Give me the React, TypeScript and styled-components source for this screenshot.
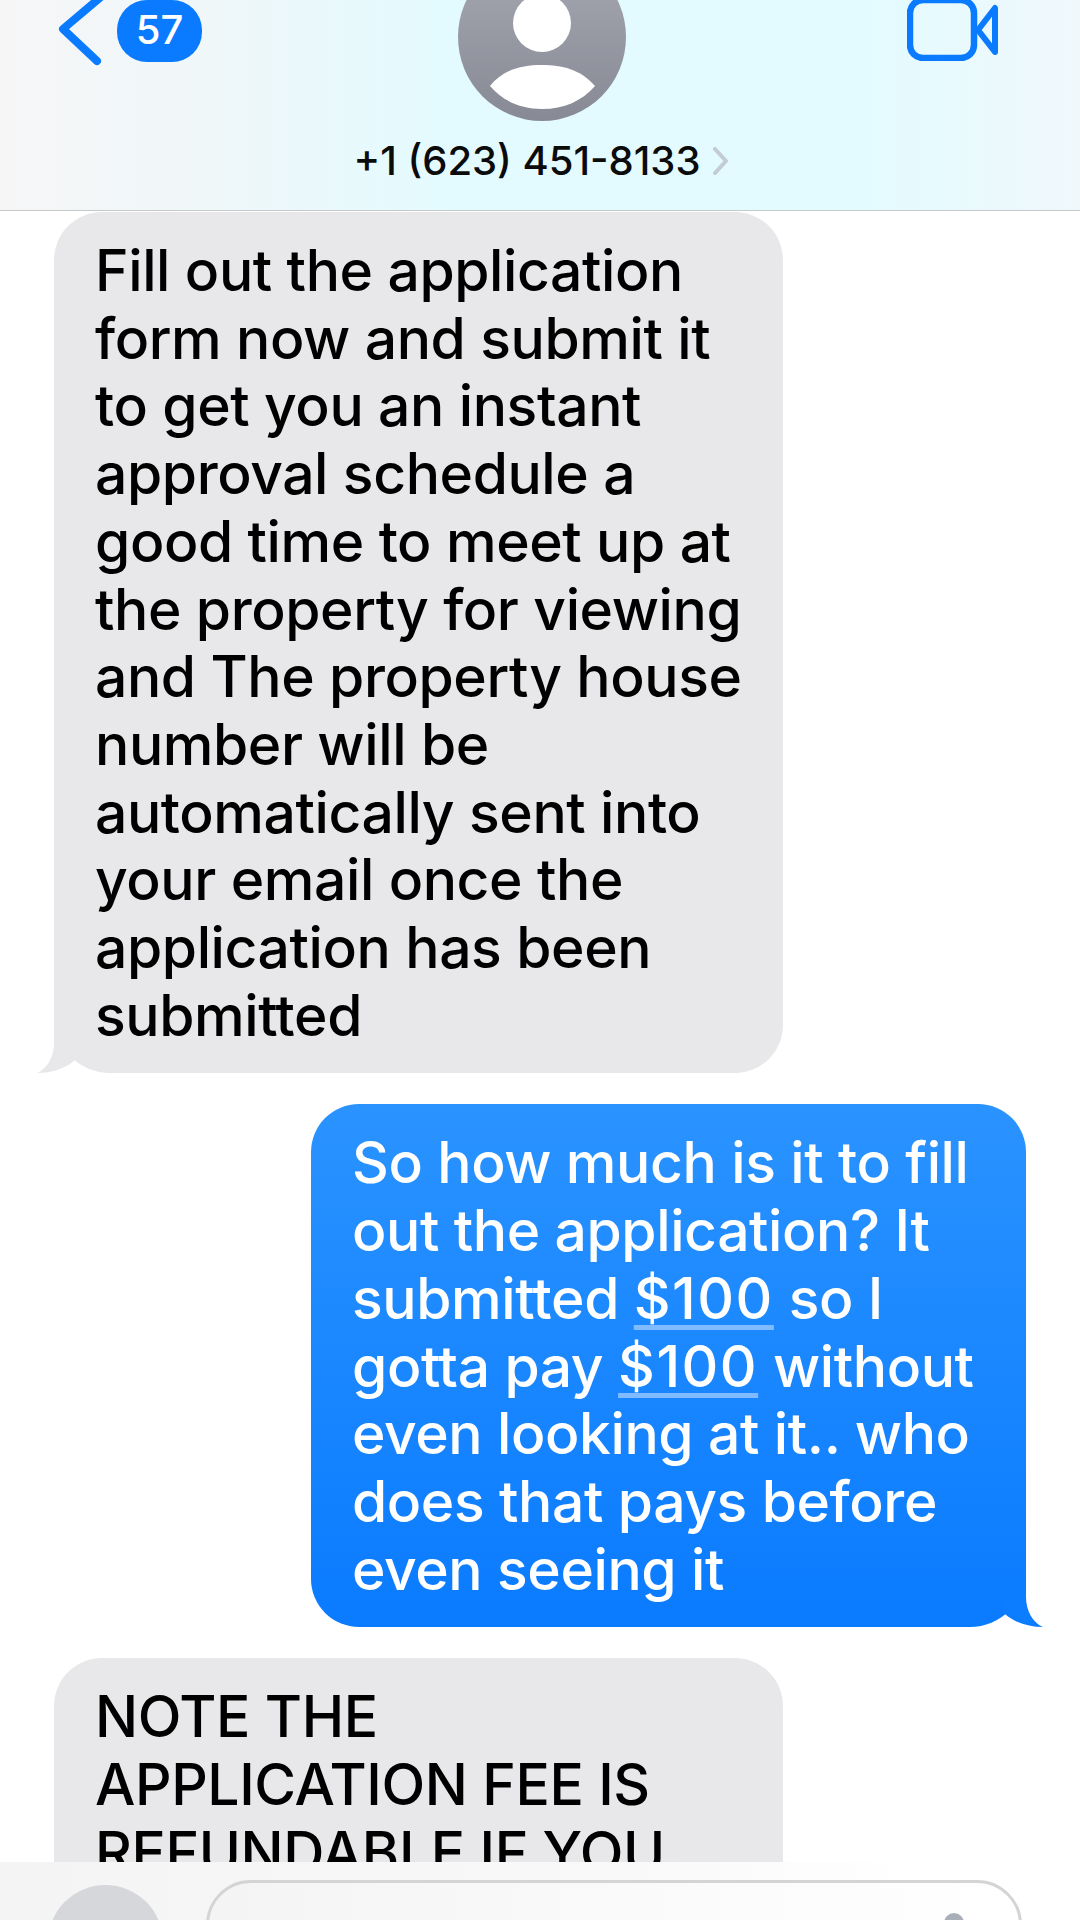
import React from 'react';
import styled, { createGlobalStyle } from 'styled-components';

const GlobalStyle = createGlobalStyle`
  html, body {
    margin: 0;
    padding: 0;
    background: #fff;
  }
`;

const Screen = styled.div`
  width: 1080px;
  height: 1920px;
  display: flex;
  flex-direction: column;
  overflow: hidden;
  background: #fff;
  font-family: Inter, 'Liberation Sans', sans-serif;
`;

const Header = styled.header`
  flex: none;
  height: 211px;
  box-sizing: border-box;
  display: grid;
  grid-template-columns: 1fr 168px 1fr;
  padding: 0 55px 0 58px;
  overflow: hidden;
  border-bottom: 1px solid #c6c8ca;
  background: linear-gradient(90deg, #f6f6f7 0%, #eef7f9 22%, #e3fbff 42%, #e3fbff 80%, #f0f8fb 100%);
`;

const BackGroup = styled.div`
  display: flex;
  align-items: flex-start;
  gap: 11px;
`;

const BackChevron = styled.svg`
  width: 48px;
  height: 80px;
  margin-top: -10px;
  flex: none;
`;

const Badge = styled.div`
  width: 85px;
  height: 62px;
  border-radius: 30px;
  background: #0a7bff;
  color: #fff;
  font-size: 40px;
  font-weight: 500;
  line-height: 60px;
  text-align: center;
`;

const Contact = styled.div`
  display: flex;
  flex-direction: column;
  align-items: center;
`;

const Avatar = styled.svg`
  width: 168px;
  height: 168px;
  margin-top: -47px;
  flex: none;
`;

const NameRow = styled.div`
  display: flex;
  align-items: center;
  gap: 11px;
  margin-top: 15px;
  white-space: nowrap;
  font-size: 40px;
  font-weight: 500;
  line-height: 50px;
  color: #0b0b0c;
`;

const Disclosure = styled.svg`
  width: 18px;
  height: 28px;
  flex: none;
`;

const VideoIcon = styled.svg`
  width: 92px;
  height: 64px;
  margin: -3px 26px 0 0;
  justify-self: end;
`;

const Thread = styled.main`
  flex: 1;
  min-height: 0;
  display: flex;
  flex-direction: column;
  gap: 31px;
  padding: 1px 54px 0;
  overflow: hidden;
`;

const Bubble = styled.div<{ $mine?: boolean; $tail?: boolean }>`
  position: relative;
  flex: none;
  box-sizing: border-box;
  align-self: ${(p) => (p.$mine ? 'flex-end' : 'flex-start')};
  width: ${(p) => (p.$mine ? '715px' : '729px')};
  padding: 25px 41px 24px;
  border-radius: 48px;
  ${(p) => p.$tail && (p.$mine ? 'border-bottom-right-radius: 56px;' : 'border-bottom-left-radius: 56px;')}
  font-size: 57px;
  font-weight: 500;
  line-height: 67.7px;
  letter-spacing: -0.4px;
  white-space: nowrap;
  color: ${(p) => (p.$mine ? '#fff' : '#000')};
  background: ${(p) => (p.$mine ? 'linear-gradient(180deg, #2a93ff 0%, #0a7bff 100%)' : '#e8e8ea')};
`;

const Line = styled.span`
  display: block;
`;

const Money = styled.span`
  letter-spacing: 1.5px;
  text-decoration: underline;
  text-decoration-color: #80baff;
  text-decoration-thickness: 5px;
  text-underline-offset: 6px;
  text-decoration-skip-ink: none;
`;

const Tail = styled.svg<{ $mine?: boolean }>`
  position: absolute;
  bottom: 0;
  width: 73px;
  height: 56px;
  ${(p) => (p.$mine ? 'right: -17px;' : 'left: -17px;')}
`;

const Footer = styled.footer`
  flex: none;
  height: 58px;
  box-sizing: border-box;
  display: flex;
  align-items: flex-start;
  gap: 43px;
  padding: 18px 58px 0 48px;
  overflow: hidden;
  background: linear-gradient(90deg, #f4f4f5 0%, #f9f9fa 60%, #ffffff 85%);
`;

const PlusButton = styled.div`
  flex: none;
  width: 115px;
  height: 115px;
  margin-top: 5px;
  border-radius: 50%;
  background: #d5d7da;
`;

const InputPill = styled.div`
  flex: 1;
  height: 90px;
  box-sizing: border-box;
  position: relative;
  border: 3px solid #d3d4d6;
  border-radius: 50px;
  background: linear-gradient(90deg, #f4f4f5 0%, #fbfbfb 60%, #fff 100%);
`;

const MicTip = styled.div`
  position: absolute;
  top: 30px;
  right: 55px;
  width: 20px;
  height: 40px;
  border-radius: 10px;
  background: #a9afb9;
`;

const firstLines = [
  'Fill out the application',
  'form now and submit it',
  'to get you an instant',
  'approval schedule a',
  'good time to meet up at',
  'the property for viewing',
  'and The property house',
  'number will be',
  'automatically sent into',
  'your email once the',
  'application has been',
  'submitted',
];

const noteLines = ['NOTE THE', 'APPLICATION FEE IS', 'REFUNDABLE IF YOU'];

export default function App() {
  return (
    <Screen>
      <GlobalStyle />
      <Header>
        <BackGroup>
          <BackChevron viewBox="0 0 48 80">
            <path d="M44 6 L5 39 L39 71" fill="none" stroke="#0a7bff" strokeWidth="8" strokeLinecap="round" strokeLinejoin="round" />
          </BackChevron>
          <Badge>57</Badge>
        </BackGroup>
        <Contact>
          <Avatar viewBox="0 0 168 168">
            <defs>
              <linearGradient id="avatarFill" x1="0" y1="0" x2="0" y2="1">
                <stop offset="0" stopColor="#a6a9b2" />
                <stop offset="1" stopColor="#878a94" />
              </linearGradient>
            </defs>
            <circle cx="84" cy="84" r="84" fill="url(#avatarFill)" />
            <circle cx="84" cy="70" r="29" fill="#fff" />
            <path d="M32 133 C46 116 64 112 84 112 C104 112 122 116 137 133 C124 148 106 156 84 156 C62 156 45 148 32 133 Z" fill="#fff" />
          </Avatar>
          <NameRow>
            +1 (623) 451-8133
            <Disclosure viewBox="0 0 18 28">
              <path d="M3 2 L14 14 L3 26" fill="none" stroke="#c3cbd3" strokeWidth="4" strokeLinecap="round" strokeLinejoin="round" />
            </Disclosure>
          </NameRow>
        </Contact>
        <VideoIcon viewBox="0 0 92 64">
          <rect x="3" y="3" width="64" height="58" rx="13" fill="none" stroke="#0a7bff" strokeWidth="6.5" />
          <path d="M71 33 L88 11 L88 55 Z" fill="none" stroke="#0a7bff" strokeWidth="6" strokeLinejoin="round" />
        </VideoIcon>
      </Header>
      <Thread>
        <Bubble $tail>
          {firstLines.map((line) => (
            <Line key={line}>{line}</Line>
          ))}
          <Tail viewBox="0 0 73 56">
            <path d="M17 0 L17 26 C17 40 10 52 0 56 C14 56 28 52 38 43 L50 0 Z" fill="#e8e8ea" />
          </Tail>
        </Bubble>
        <Bubble $mine $tail>
          <Line>So how much is it to fill</Line>
          <Line>out the application? It</Line>
          <Line>
            submitted <Money>$100</Money> so I
          </Line>
          <Line>
            gotta pay <Money>$100</Money> without
          </Line>
          <Line>even looking at it.. who</Line>
          <Line>does that pays before</Line>
          <Line>even seeing it</Line>
          <Tail $mine viewBox="0 0 73 56">
            <path d="M56 0 L56 26 C56 40 63 52 73 56 C59 56 45 52 35 43 L23 0 Z" fill="#0c7dff" />
          </Tail>
        </Bubble>
        <Bubble>
          {noteLines.map((line) => (
            <Line key={line}>{line}</Line>
          ))}
        </Bubble>
      </Thread>
      <Footer>
        <PlusButton />
        <InputPill>
          <MicTip />
        </InputPill>
      </Footer>
    </Screen>
  );
}
